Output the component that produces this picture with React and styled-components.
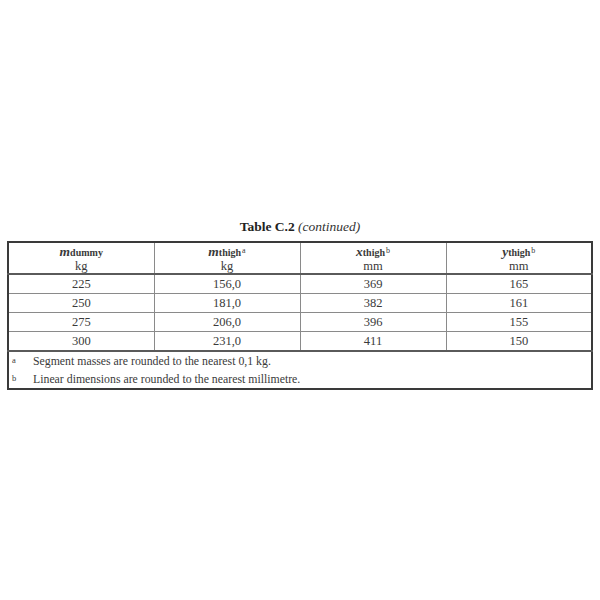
import React from "react";
import styled, { createGlobalStyle } from "styled-components";

const GlobalStyles = createGlobalStyle`
  html, body {
    margin: 0;
    padding: 0;
    background: #fff;
  }
  body {
    font-family: "Liberation Serif", "DejaVu Serif", serif;
    color: #3a3a3a;
  }
`;

const rows = [
  ["225", "156,0", "369", "165"],
  ["250", "181,0", "382", "161"],
  ["275", "206,0", "396", "155"],
  ["300", "231,0", "411", "150"]
];

const notes = [
  ["a", "Segment masses are rounded to the nearest 0,1 kg."],
  ["b", "Linear dimensions are rounded to the nearest millimetre."]
];

const headers = [
  { sym: "m", sub: "dummy", unit: "kg" },
  { sym: "m", sub: "thigh", sup: "a", unit: "kg" },
  { sym: "x", sub: "thigh", sup: "b", unit: "mm" },
  { sym: "y", sub: "thigh", sup: "b", unit: "mm" }
];

export default function App() {
  return (
    <Page>
      <GlobalStyles />
      <Caption>
        <b>Table C.2</b> <i>(continued)</i>
      </Caption>
      <Table>
        <colgroup>
          {headers.map((h, i) => (
            <col key={i} style={{ width: "25%" }} />
          ))}
        </colgroup>
        <thead>
          <tr>
            {headers.map((h, i) => (
              <Head key={i}>
                <Quantity>
                  <Sym>{h.sym}</Sym>
                  <Sub>{h.sub}</Sub>
                  {h.sup && <Sup>{h.sup}</Sup>}
                </Quantity>
                <Unit>{h.unit}</Unit>
              </Head>
            ))}
          </tr>
        </thead>
        <tbody>
          {rows.map((r, i) => (
            <tr key={i}>
              {r.map((v, j) => (
                <Cell key={j}>{v}</Cell>
              ))}
            </tr>
          ))}
        </tbody>
        <tfoot>
          {notes.map(([mark, text], i) => (
            <tr key={mark}>
              <Note colSpan={4} $first={i === 0}>
                <Mark>{mark}</Mark>
                {text}
              </Note>
            </tr>
          ))}
        </tfoot>
      </Table>
    </Page>
  );
}

const Page = styled.div`
  width: 600px;
  height: 600px;
  padding-top: 219px;
  box-sizing: border-box;
`;

const Caption = styled.div`
  text-align: center;
  font-size: 13.5px;
  line-height: 16px;
  color: #222;
  margin-bottom: 6px;
  b {
    font-weight: bold;
  }
  i {
    font-style: italic;
    color: #333;
  }
`;

const Table = styled.table`
  margin-left: 7px;
  width: 586px;
  border-collapse: collapse;
  table-layout: fixed;
  border: 2px solid #3a3a3a;
  font-size: 12.5px;
`;

const Head = styled.th`
  font-weight: normal;
  text-align: center;
  vertical-align: middle;
  height: 30px;
  padding: 0;
  border-left: 1px solid #8a8a8a;
  border-bottom: 2px solid #5a5a5a;
`;

const Quantity = styled.div`
  line-height: 16px;
  height: 16px;
  white-space: nowrap;
`;

const Sym = styled.span`
  font-style: italic;
  font-weight: bold;
  font-size: 13.5px;
`;

const Sub = styled.span`
  font-weight: bold;
  font-size: 10px;
`;

const Sup = styled.span`
  font-size: 8px;
  position: relative;
  top: -3px;
  margin-left: 1px;
`;

const Unit = styled.div`
  font-size: 12.5px;
  line-height: 13px;
  height: 13px;
`;

const Cell = styled.td`
  text-align: center;
  height: 18px;
  padding: 0;
  line-height: 18px;
  border-left: 1px solid #8a8a8a;
  border-top: 1px solid #8a8a8a;
`;

const Note = styled.td`
  height: 18px;
  padding: 0 0 0 3px;
  line-height: 17px;
  font-size: 11.8px;
  text-align: left;
  border-top: ${(p) => (p.$first ? "2px solid #5a5a5a" : "none")};
`;

const Mark = styled.span`
  display: inline-block;
  width: 21px;
  font-size: 8.5px;
  vertical-align: 2px;
`;
